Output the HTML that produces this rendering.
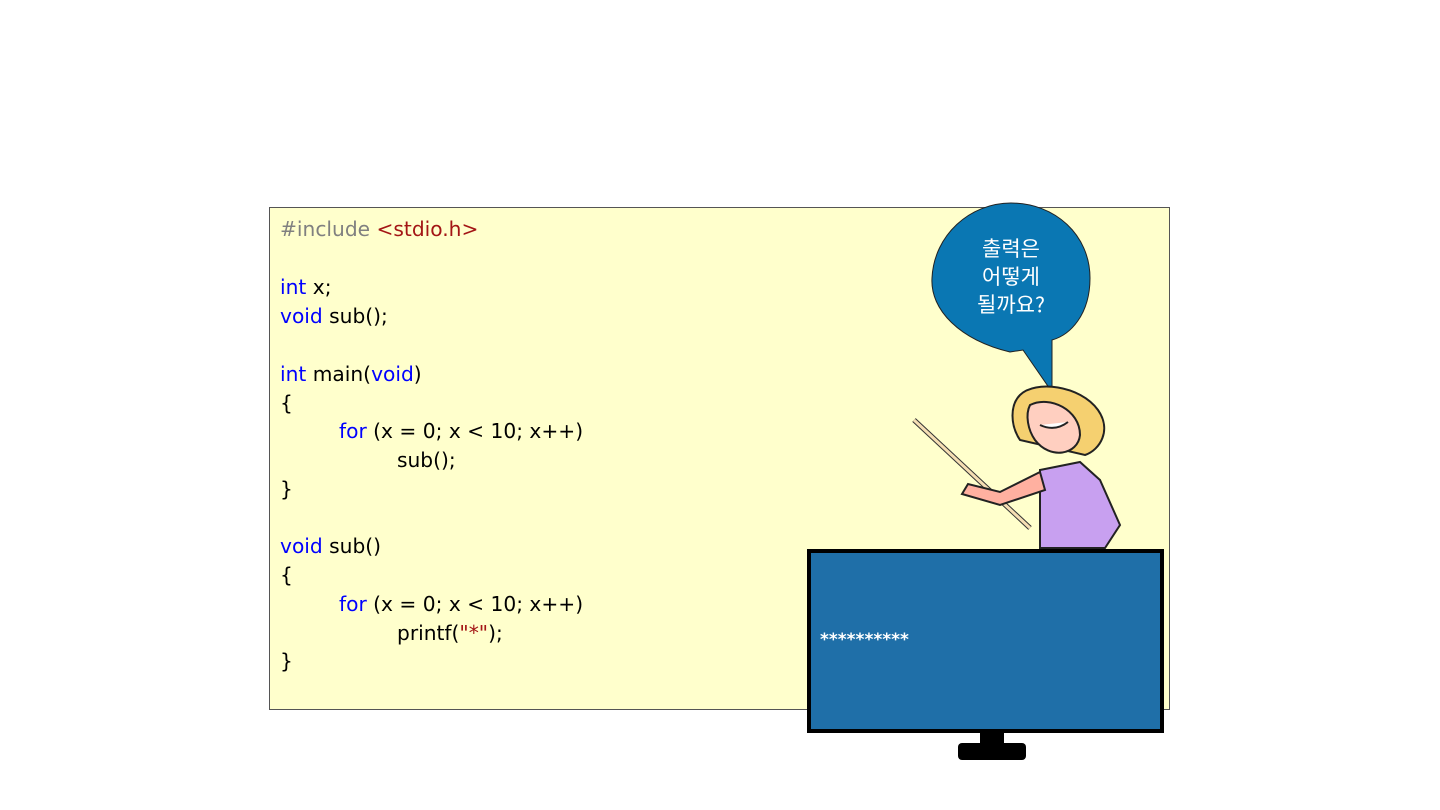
<!DOCTYPE html>
<html><head><meta charset="utf-8"><style>
body{margin:0;width:1440px;height:810px;background:#fff;position:relative;overflow:hidden}
.box{position:absolute;left:269px;top:207px;width:901px;height:503px;background:#ffffcc;border:1px solid #555;box-sizing:border-box}
.l{position:absolute;font-family:"DejaVu Sans",sans-serif;font-size:20.2px;color:#000;white-space:pre;line-height:20px}
.k{color:#0000ff}.g{color:#808080}.r{color:#a31515}
</style></head><body>
<div class="box"></div>
<div class="l" style="left:280px;top:219px"><span class="g">#include</span> <span class="r">&lt;stdio.h&gt;</span></div>
<div class="l" style="left:280px;top:277px"><span class="k">int</span> x;</div>
<div class="l" style="left:280px;top:306px"><span class="k">void</span> sub();</div>
<div class="l" style="left:280px;top:364px"><span class="k">int</span> main(<span class="k">void</span>)</div>
<div class="l" style="left:280px;top:393px">{</div>
<div class="l" style="left:339px;top:421px"><span class="k">for</span> (x = 0; x &lt; 10; x++)</div>
<div class="l" style="left:397px;top:450px">sub();</div>
<div class="l" style="left:280px;top:479px">}</div>
<div class="l" style="left:280px;top:536px"><span class="k">void</span> sub()</div>
<div class="l" style="left:280px;top:565px">{</div>
<div class="l" style="left:339px;top:594px"><span class="k">for</span> (x = 0; x &lt; 10; x++)</div>
<div class="l" style="left:397px;top:623px">printf(<span class="r">"*"</span>);</div>
<div class="l" style="left:280px;top:651px">}</div>
<svg style="position:absolute;left:0;top:0" width="1440" height="810">
<path d="M1010 352 C960 340 930 310 932 278 C934 235 970 203 1011 203 C1055 203 1090 235 1090 278 C1090 315 1070 335 1052 340 L1052 392 L1023 350 Z" fill="#0a77b3" stroke="#222" stroke-width="1"/>
<text x="1011" y="256" fill="#fff" font-family="'Noto Sans CJK KR',sans-serif" font-size="21" text-anchor="middle">출력은</text>
<text x="1011" y="284" fill="#fff" font-family="'Noto Sans CJK KR',sans-serif" font-size="21" text-anchor="middle">어떻게</text>
<text x="1011" y="312" fill="#fff" font-family="'Noto Sans CJK KR',sans-serif" font-size="21" text-anchor="middle">될까요?</text>
<line x1="914" y1="420" x2="1030" y2="528" stroke="#333" stroke-width="5"/>
<line x1="914" y1="420" x2="1030" y2="528" stroke="#f5deb3" stroke-width="3"/>
<path d="M1040 470 L1080 462 L1100 480 L1120 525 L1105 548 L1040 548 Z" fill="#c8a0f0" stroke="#222" stroke-width="2"/>
<path d="M1040 472 L1000 492 L968 484 L962 494 L1000 505 L1045 490 Z" fill="#ffb0a0" stroke="#222" stroke-width="2"/>
<path d="M1020 395 C1035 380 1080 385 1098 410 C1112 430 1100 450 1085 455 L1020 440 C1010 425 1010 405 1020 395 Z" fill="#f5d070" stroke="#222" stroke-width="2"/>
<path d="M1030 405 C1050 395 1080 410 1080 435 C1078 455 1050 460 1035 440 C1028 430 1025 415 1030 405 Z" fill="#ffcfc0" stroke="#222" stroke-width="2"/>
<path d="M1040 425 Q1055 432 1068 422" fill="#fff" stroke="#222" stroke-width="2"/>
<rect x="809" y="551" width="353" height="180" fill="#1f6fa8" stroke="#000" stroke-width="4"/>
<text x="820" y="645" fill="#fff" font-family="'DejaVu Sans',sans-serif" font-weight="bold" font-size="17">**********</text>
<rect x="980" y="731" width="24" height="14" fill="#000"/>
<rect x="958" y="743" width="68" height="17" rx="4" fill="#000"/>
</svg>
</body></html>
